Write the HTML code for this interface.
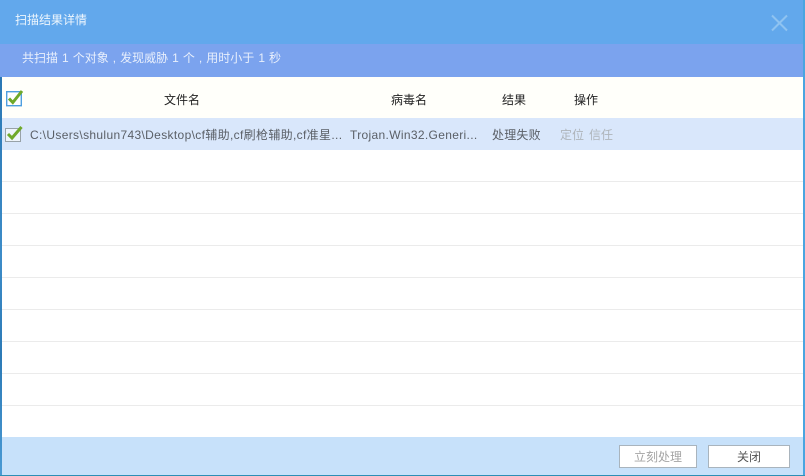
<!DOCTYPE html>
<html>
<head>
<meta charset="utf-8">
<style>
html,body{margin:0;padding:0;width:805px;height:476px;overflow:hidden;background:#fff;}
body{position:relative;font-family:"Liberation Sans","Noto Sans CJK SC",sans-serif;}
.a{position:absolute;white-space:nowrap;}
.t{font-size:12px;line-height:16px;}
.ln{position:absolute;left:2px;right:2px;height:1px;background:#ebebeb;}
.btn{position:absolute;top:445px;height:23px;box-sizing:border-box;border:1px solid #a9b4bd;background:#fff;text-align:center;font-size:12px;line-height:23px;}
</style>
</head>
<body>
<div class="a" style="left:0;top:0;width:805px;height:44px;background:#62a8ec;"></div>
<div class="a" style="left:0;top:44px;width:805px;height:33px;background:#7ba3ee;"></div>
<div class="a" style="left:2px;top:77px;width:801px;height:41px;background:#fffffa;"></div>
<div class="a" style="left:2px;top:118px;width:801px;height:32px;background:#d9e7fb;"></div>
<div class="a" style="left:2px;top:437px;width:801px;height:38px;background:#c7e1fa;"></div>

<div class="a" style="left:0;top:77px;width:2px;height:399px;background:linear-gradient(#2a78b4,#3d8cc8 45%,#2c7ab6 70%,#4a9ad4);"></div>
<div class="a" style="right:0;top:0;width:2px;height:476px;background:#4aa5e0;"></div>
<div class="a" style="left:0;top:475px;width:805px;height:1px;background:#2c8fb5;"></div>

<div class="ln" style="top:181px"></div>
<div class="ln" style="top:213px"></div>
<div class="ln" style="top:245px"></div>
<div class="ln" style="top:277px"></div>
<div class="ln" style="top:309px"></div>
<div class="ln" style="top:341px"></div>
<div class="ln" style="top:373px"></div>
<div class="ln" style="top:405px"></div>

<div class="a t" style="left:15px;top:12px;color:#eef6fd;">扫描结果详情</div>
<div class="a t" style="left:22px;top:50px;color:#e8effc;word-spacing:0.7px;">共扫描 1 个对象 , 发现威胁 1 个 , 用时小于 1 秒</div>

<svg class="a" style="left:770px;top:14px" width="19" height="18" viewBox="0 0 19 18">
<path d="M2 1.5L17 16.5M17 1.5L2 16.5" stroke="#8fc3f1" stroke-width="2" fill="none"/>
</svg>

<svg class="a" style="left:4px;top:88px" width="20" height="20" viewBox="0 0 20 20">
<rect x="2.7" y="3.7" width="14.6" height="14" fill="#fff" stroke="#4e9fe0" stroke-width="1.4"/>
<path d="M5 10.5L8.8 14.5L18 3" stroke="#6fa92a" stroke-width="3" fill="none"/>
</svg>
<svg class="a" style="left:4px;top:124px" width="20" height="20" viewBox="0 0 20 20">
<rect x="1.5" y="4.5" width="15" height="13" fill="#eef4fb" stroke="#98a2a8" stroke-width="1"/>
<path d="M4 10L8 14L17.5 3" stroke="#6fa92a" stroke-width="3" fill="none"/>
</svg>

<div class="a t" style="left:164px;top:92px;color:#222;">文件名</div>
<div class="a t" style="left:391px;top:92px;color:#222;">病毒名</div>
<div class="a t" style="left:502px;top:92px;color:#222;">结果</div>
<div class="a t" style="left:574px;top:92px;color:#222;">操作</div>

<div class="a t" style="left:30px;top:127px;color:#5a5f66;letter-spacing:0.34px;">C:\Users\shulun743\Desktop\cf辅助,cf刷枪辅助,cf准星...</div>
<div class="a t" style="left:350px;top:127px;color:#5a5f66;letter-spacing:0.33px;">Trojan.Win32.Generi...</div>
<div class="a t" style="left:492px;top:127px;color:#5a5f66;letter-spacing:0.2px;">处理失败</div>
<div class="a t" style="left:560px;top:127px;color:#aeb4ba;">定位</div>
<div class="a t" style="left:589px;top:127px;color:#aeb4ba;">信任</div>

<div class="btn" style="left:619px;width:78px;color:#a4a4a4;">立刻处理</div>
<div class="btn" style="left:708px;width:82px;color:#555;">关闭</div>
</body>
</html>
